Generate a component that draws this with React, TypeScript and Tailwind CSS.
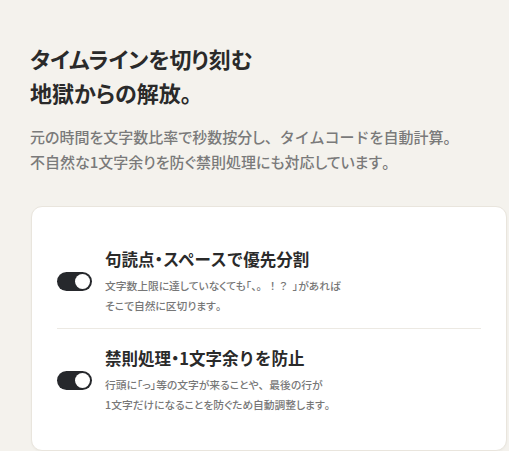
const font = {
  fontFamily: '"Noto Sans CJK JP", "Noto Sans", sans-serif',
};

// full-width glyphs inside proportional text
function P({ children }: { children: string }) {
  return <span className="[font-feature-settings:normal]">{children}</span>;
}

// narrow middle dot inside full-width text
function Dot() {
  return <span className="[font-feature-settings:'palt']">・</span>;
}

type Item = {
  title: React.ReactNode;
  lines: React.ReactNode[];
};

const items: Item[] = [
  {
    title: (
      <>
        句読点<Dot />スペースで優先分割
      </>
    ),
    lines: [
      <>
        文字数上限に達していなくても「<P>、。！？</P>
        <span className="ml-[4px]">」があれば</span>
      </>,
      <>
        そこで自然に区切ります<P>。</P>
      </>,
    ],
  },
  {
    title: (
      <>
        禁則処理<Dot />1文字余りを防止
      </>
    ),
    lines: [
      <>
        行頭に「っ」等の文字が来ることや<P>、</P>最後の行が
      </>,
      <>
        1文字だけになることを防ぐため自動調整します<P>。</P>
      </>,
    ],
  },
];

function Toggle() {
  return (
    <div className="flex h-[19px] w-[35px] shrink-0 items-center justify-end rounded-full bg-[#26282c] pr-[2px]">
      <div className="h-[15px] w-[15px] rounded-full bg-white" />
    </div>
  );
}

export default function App() {
  return (
    <div
      className="min-h-screen bg-[#f4f2ed] pl-[30px] pr-[2px] pt-[41px] [font-feature-settings:'palt']"
      style={font}
    >
      <h1 className="text-[22px] font-bold leading-[34px] text-[#2a2a2a]">
        タイムラインを切り刻む
        <br />
        地獄からの解放<P>。</P>
      </h1>
      <p className="mt-[15px] text-[15px] font-medium leading-[25px] text-[#7a7a7a]">
        元の時間を文字数比率で秒数按分し<P>、タイムコード</P>を自動計算<P>。</P>
        <br />
        不自然な1文字余りを防ぐ禁則処理にも対応しています<P>。</P>
      </p>

      <div className="ml-px mt-[32px] rounded-[11px] border border-[#e9e5dd] bg-white px-[25px] pb-[35px] pt-[40px] shadow-[0_1px_2px_rgba(0,0,0,0.03)]">
        {items.map((it, i) => (
          <div
            key={i}
            className={
              i === 0
                ? "flex items-center gap-[13px] border-b border-[#ece9e3] pb-[12px]"
                : "flex items-center gap-[13px] pt-[17px]"
            }
          >
            <Toggle />
            <div>
              <div className="text-[16.5px] font-bold leading-[24px] text-[#2a2a2a] [font-feature-settings:normal]">
                {it.title}
              </div>
              <div className="mt-[5px] text-[10.75px] font-medium leading-[20px] text-[#777]">
                {it.lines[0]}
                <br />
                {it.lines[1]}
              </div>
            </div>
          </div>
        ))}
      </div>
    </div>
  );
}
